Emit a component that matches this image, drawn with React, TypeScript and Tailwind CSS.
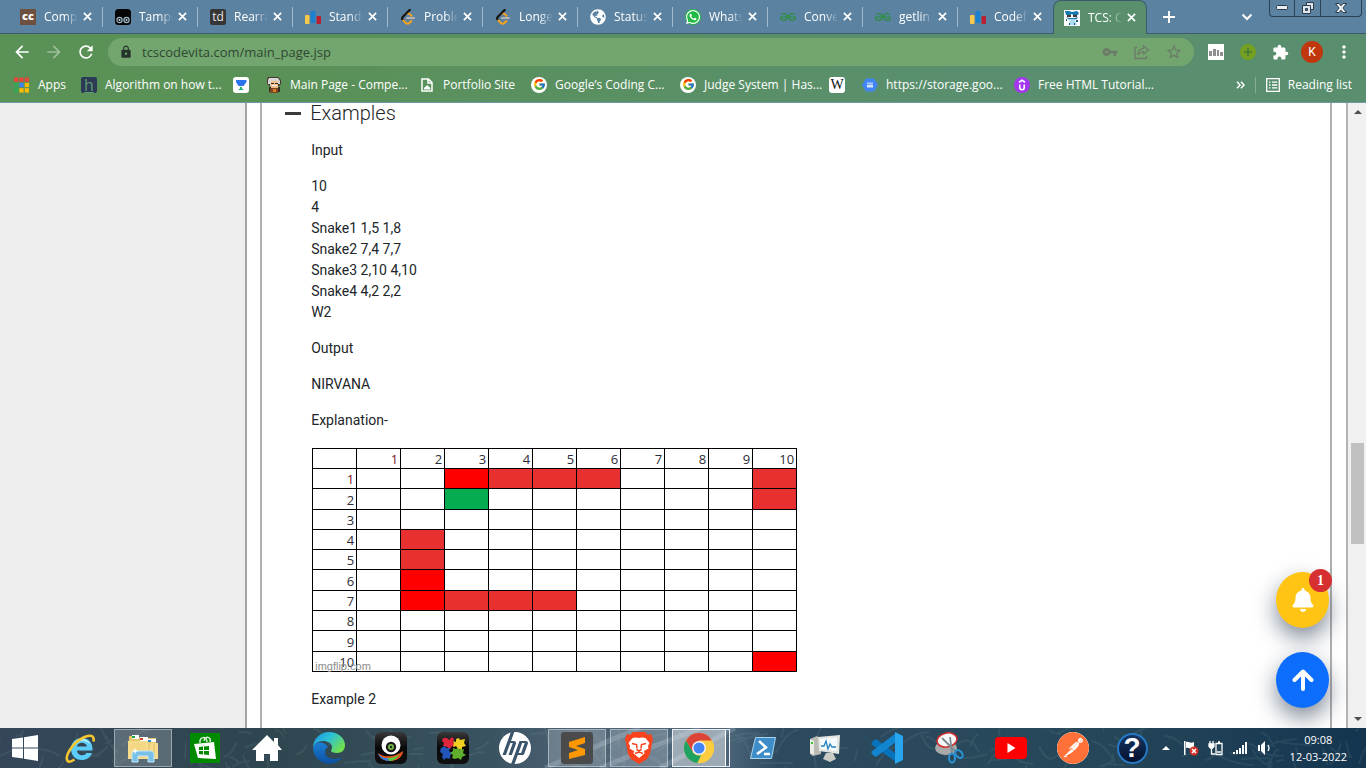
import React from 'react';
import type { ReactNode } from 'react';
import { FcGoogle } from 'react-icons/fc';
import { FaWhatsapp, FaBell, FaGlobeAmericas } from 'react-icons/fa';
import { SiGeeksforgeeks, SiHp, SiPostman } from 'react-icons/si';
import { MdExtension, MdVpnKey, MdStarBorder, MdLock, MdRefresh, MdArrowBack, MdArrowForward, MdMoreVert } from 'react-icons/md';

const ui = "font-['Open_Sans','Noto_Sans',sans-serif]";

const Bars = () => (
  <svg viewBox="0 0 16 16" className="size-4 shrink-0" aria-hidden="true">
    <rect x="0" y="6" width="4.5" height="9" rx="1" fill="#f8c94a" />
    <rect x="5.5" y="2" width="5" height="12" rx="1" fill="#1c80d0" />
    <rect x="11.5" y="7" width="4.5" height="8" rx="1" fill="#b91f2e" />
  </svg>
);

const Leet = () => (
  <svg viewBox="0 0 24 24" className="size-4 shrink-0" fill="none" strokeWidth="3" strokeLinecap="round" aria-hidden="true">
    <path d="M14.5 1.5 4.5 11.5c-1.7 1.7-1.7 3.6 0 5.2" stroke="#161616" />
    <path d="m4.5 16.700 4 4c1.800 1.700 4.200 1.700 6 0l2.600-2.600M8.500 7.500c2.500-1.500 4.500-1.200 6 .2l2.700 2.500" stroke="#f5a31c" />
    <path d="M14.5 1.5 4.5 11.5c-1.2 1.2-1.5 2.500-1 3.700" stroke="#161616" />
    <path d="M10.500 13.500H21" stroke="#b3b3b3" />
  </svg>
);

const Mascot = () => (
  <svg viewBox="0 0 16 16" className="size-4 shrink-0" aria-hidden="true">
    <path fill="#fff" d="M0 0h16v16H0z" />
    <path fill="#1579ad" d="M1 1h4l3 1 5-1 2 2-1 2H9L8 4 6 5H2z" />
    <path fill="#4c3430" d="M3 5h4v2H3zM9 5h4v2H9z" />
    <path fill="#1579ad" d="m2 7 3 1h6l3-1-1 2-4 1-5-1z" />
    <path fill="#a9dcf2" d="M5 9h6v2l2 4H4l2-4z" />
    <path fill="#1d5f86" d="M2 9h1v2H2zM12 10h2v2h-2zM5 13h1v2H5zM10 13h1v2h-1z" />
  </svg>
);

const Tamper = () => (
  <svg viewBox="0 0 16 16" className="size-4 shrink-0" aria-hidden="true">
    <rect width="16" height="16" rx="3.500" fill="#050505" />
    <circle cx="4.500" cy="11" r="2.600" fill="#111" stroke="#9db9c9" strokeWidth="1.200" />
    <circle cx="11.500" cy="11" r="2.600" fill="#111" stroke="#9db9c9" strokeWidth="1.200" />
    <circle cx="4.500" cy="11" r=".9" fill="#cfe0ea" />
    <circle cx="11.500" cy="11" r=".9" fill="#cfe0ea" />
  </svg>
);

const tabs: { title: string; icon: ReactNode }[] = [
  { title: 'Comp', icon: <span className="flex size-4 shrink-0 items-center justify-center bg-[#6d5040] text-[11px] font-extrabold text-white">cc</span> },
  { title: 'Tampe', icon: <Tamper /> },
  { title: 'Rearra', icon: <span className="flex size-4 shrink-0 items-center justify-center rounded-xs bg-[#363636] text-xs leading-4 text-gray-200">td</span> },
  { title: 'Standi', icon: <Bars /> },
  { title: 'Proble', icon: <Leet /> },
  { title: 'Longe', icon: <Leet /> },
  { title: 'Status', icon: <FaGlobeAmericas className="size-4 shrink-0" /> },
  {
    title: 'Whats',
    icon: (
      <span className="flex size-4 shrink-0 items-center justify-center rounded-full bg-[#1fb943]">
        <FaWhatsapp className="size-4" />
      </span>
    ),
  },
  { title: 'Conve', icon: <SiGeeksforgeeks className="size-4 shrink-0 text-[#2f8d46]" /> },
  { title: 'getlin', icon: <SiGeeksforgeeks className="size-4 shrink-0 text-[#2f8d46]" /> },
  { title: 'Codef', icon: <Bars /> },
  { title: 'TCS: C', icon: <Mascot /> },
];

const Cross = () => (
  <svg viewBox="0 0 10 10" className="size-[9px]" stroke="currentColor" strokeWidth="1.900" aria-hidden="true">
    <path d="m1 1 8 8M9 1 1 9" />
  </svg>
);

function TabStrip() {
  return (
    <div className={`flex h-[34px] shrink-0 items-stretch border-b border-[#3e5b6d] bg-[#5b82a1] pl-2 text-xs text-white ${ui}`}>
      {tabs.map((t, i) => {
        const active = i === tabs.length - 1;
        return (
          <div
            key={i}
            className={
              active
                ? '-mb-px flex w-[94px] items-center rounded-t-lg border-x border-t border-[#3e5b6d] bg-[#598f6c] pl-[10px]'
                : 'flex w-[95px] items-center pl-3'
            }
          >
            {t.icon}
            <span className="ml-2 w-[34px] overflow-hidden whitespace-nowrap [mask-image:linear-gradient(to_right,black_60%,transparent)]">{t.title}</span>
            <button aria-label={`Close ${t.title}`} className="ml-1 flex size-[10px] items-center justify-center">
              <Cross />
            </button>
            {i < 10 && <span className="ml-auto h-5 w-px bg-[#a3b8c9]" />}
          </div>
        );
      })}
      <button aria-label="New tab" className="ml-3 flex w-5 items-center justify-center">
        <svg viewBox="0 0 12 12" className="size-3" stroke="currentColor" strokeWidth="1.900"><path d="M6 0v12M0 6h12" /></svg>
      </button>
      <div className="ml-auto flex">
        <button aria-label="Search tabs" className="flex w-7 items-center justify-center">
          <svg viewBox="0 0 12 8" className="h-2 w-3" fill="none" stroke="currentColor" strokeWidth="2"><path d="m1.500 1.500 4.500 4.500 4.500-4.500" /></svg>
        </button>
        <div className="mr-1 ml-2 flex h-[17px] rounded-b-[4px] border border-t-0 border-[#2b4254]">
          <button aria-label="Minimize" className="flex w-[25px] items-center justify-center border-r border-[#2b4254]">
            <svg viewBox="0 0 12 6" className="h-[6px] w-3"><rect x=".5" y=".5" width="11" height="4" rx="1" fill="#e8edf2" stroke="#2c3c4b" /></svg>
          </button>
          <button aria-label="Restore" className="flex w-[26px] items-center justify-center border-r border-[#2b4254]">
            <svg viewBox="0 0 12 12" className="size-3" fill="#dfe6ec" stroke="#2c3c4b"><path d="M4.500.5h7v7h-7z" /><path d="M.5 3.500h8v8h-8z" /><path d="M3.500 6.500h2v2h-2z" fill="#5b82a1" /></svg>
          </button>
          <button aria-label="Close window" className="flex w-[40px] items-center justify-center">
            <svg viewBox="0 0 12 10" className="h-[10px] w-3"><path d="M.5.500h3.500l2 2.300 2-2.300h3.500L8 5l3.500 4.500H8L6 7.200 4 9.500H.5L4 5z" fill="#e8edf2" stroke="#2c3c4b" /></svg>
          </button>
        </div>
      </div>
    </div>
  );
}

function Toolbar() {
  return (
    <div className={`flex h-9 shrink-0 items-center pl-3 text-white ${ui}`}>
      <button aria-label="Back" className="w-8"><MdArrowBack className="size-5" /></button>
      <button aria-label="Forward" className="w-8 text-[#9dbf9b]"><MdArrowForward className="size-5" /></button>
      <button aria-label="Reload" className="w-8"><MdRefresh className="size-5" /></button>
      <div className="flex h-7 min-w-0 flex-1 items-center rounded-full bg-[#73a66f] pl-[11px]">
        <MdLock className="size-[14px] shrink-0 text-[#26332a]" />
        <label className="ml-[9px] min-w-0 flex-1 text-[13px]">
          <input aria-label="Address" defaultValue="tcscodevita.com/main_page.jsp" className="w-full bg-transparent leading-5 text-[#2f4733] outline-none" />
        </label>
        <button aria-label="Passwords" className="flex w-8 justify-center text-[#6c7a68]"><MdVpnKey className="size-4" /></button>
        <button aria-label="Share" className="flex w-8 justify-center text-[#6c7a68]">
          <svg viewBox="0 0 16 16" className="size-4" fill="none" stroke="currentColor" strokeWidth="1.300"><path d="M3 3.500H1v11h11.500V12M9.500 2l5 4-5 4V7.800C6.500 7.800 5 9 3.800 11c.3-3.500 2.200-6.200 5.700-6.600z" /></svg>
        </button>
        <button aria-label="Bookmark this page" className="mr-1 flex w-8 justify-center text-[#6c7a68]"><MdStarBorder className="size-[18px]" /></button>
      </div>
      <div className="ml-[6px] flex pr-[6px]">
        <button aria-label="Standings extension" className="flex w-8 items-center justify-center">
          <svg viewBox="0 0 16 16" className="size-4"><path fill="#fff" d="M0 0h16v16H0z" /><path fill="#8f8f8f" d="M1 7h3v5H1zM5 5h3v7H5zM9 6h2v6H9zM12 8h3v4h-3z" /></svg>
        </button>
        <button aria-label="Add extension" className="flex w-8 items-center justify-center">
          <svg viewBox="0 0 16 16" className="size-4"><circle cx="8" cy="8" r="8" fill="#759f20" /><path d="M8 4v8M4 8h8" stroke="#3f7a3a" strokeWidth="1.500" /></svg>
        </button>
        <button aria-label="Extensions" className="flex w-8 items-center justify-center"><MdExtension className="size-[17px]" /></button>
        <button aria-label="Profile" className="flex w-8 items-center justify-center">
          <span className="flex size-[22px] items-center justify-center rounded-full bg-[#c0360d] font-['Roboto',sans-serif] text-xs">K</span>
        </button>
        <button aria-label="Menu" className="flex w-8 items-center justify-center"><MdMoreVert className="size-5" /></button>
      </div>
    </div>
  );
}

const GoogleIcon = () => (
  <span className="flex size-4 shrink-0 items-center justify-center rounded-full bg-white"><FcGoogle className="size-[13px]" /></span>
);

const AppsIcon = () => (
  <svg viewBox="0 0 14 14" className="size-4 shrink-0 pr-px" aria-hidden="true">
    {['#e8453c', '#e8453c', '#e8453c', '#34a853', '#4285f4', '#fbbc05', '#34a853', '#fbbc05', '#fbbc05'].map((c, i) => (
      <rect key={i} x={(i % 3) * 5} y={Math.floor(i / 3) * 5} width="4" height="4" fill={c} />
    ))}
  </svg>
);

const bookmarks: { label?: string; name?: string; width: string; icon: ReactNode }[] = [
  { label: 'Apps', width: 'w-[67px]', icon: <AppsIcon /> },
  { label: 'Algorithm on how t...', width: 'w-[152px]', icon: <span className="flex size-4 shrink-0 items-center justify-center rounded-xs bg-[#2b3a55] text-base leading-4 text-[#5f9b72] underline">h</span> },
  {
    name: 'Unstop', width: 'w-[33px]',
    icon: <svg viewBox="0 0 16 16" className="size-4"><rect width="16" height="16" rx="3" fill="#fff" /><path fill="#2a74ee" d="M3 3h10.500v2L10.500 9h-5L3 5z" /><path fill="#1eb678" d="M7 10h2v1.500l2 1.500H5l2-1.500z" /></svg>,
  },
  {
    label: 'Main Page - Compe...', width: 'w-[153px]',
    icon: (
      <svg viewBox="0 0 16 16" className="size-4 shrink-0">
        <path fill="#4a3830" d="M2 0h10l3 3v4l-2 2H3L1 6V2z" />
        <path fill="#d8d8d8" d="M3 1h9l2 3v3h-2v2H4V7H2V3z" />
        <path fill="#f1bd8a" d="M5 4h7v7H5z" />
        <path fill="#3a2a22" d="M5 6h3v1H5zM9 6h3v1H9zM3 10h2v5H3zM12 10h2v5h-2z" /><path fill="#f3f3f3" d="M6 8h5v1H6z" />
        <path fill="#7a4a25" d="M5 11h7v5H4v-3z" /><path fill="#dc7a20" d="M7 12h3v3H7z" />
      </svg>
    ),
  },
  {
    label: 'Portfolio Site', width: 'w-[112px]',
    icon: <svg viewBox="0 0 16 16" className="size-4 shrink-0" fill="none" stroke="#fff" strokeWidth="1.500"><path d="M3 2h6.500L13 5.500V14H3zM9 2v4h4" /><path fill="#fff" stroke="none" d="M5 12.500c-.5-2 1-2.500 1.500-2.500.5-2 3-2 3.400 0 1 0 2 1 1.300 2.500z" /></svg>,
  },
  { label: 'Google’s Coding C...', width: 'w-[149px]', icon: <GoogleIcon /> },
  { label: 'Judge System | Has...', width: 'w-[149px]', icon: <GoogleIcon /> },
  { name: 'Wikipedia', width: 'w-[33px]', icon: <span className="flex size-4 items-center justify-center rounded-[3px] bg-white font-['Liberation_Serif',serif] text-sm leading-4 text-[#111111]">W</span> },
  { label: 'https://storage.goo...', width: 'w-[152px]', icon: <svg viewBox="0 0 16 16" className="size-4 shrink-0"><path fill="#4285f4" d="M4 1.500h8L16 8l-4 6.500H4L0 8z" /><path fill="#a9c8fb" d="M5 5.500h6v2H5z" /><path fill="#d5e3fd" d="M5 8h6v2.500H5z" /></svg> },
  {
    label: 'Free HTML Tutorial...', width: 'w-[152px]',
    icon: <svg viewBox="0 0 16 16" className="size-4 shrink-0"><circle cx="8" cy="8" r="8" fill="#a435f0" /><path d="M5.800 7.500v3a2.200 2.200 0 0 0 4.400 0v-3M5 5.200l3-1.900 3 1.900" fill="none" stroke="#fff" strokeWidth="1.600" /></svg>,
  },
];

function BookmarksBar() {
  return (
    <nav aria-label="Bookmarks" className={`flex h-8 shrink-0 items-center pb-[3px] pl-[14px] text-xs text-white ${ui}`}>
      {bookmarks.map((b, i) => (
        <a key={i} href="#" aria-label={b.label ?? b.name} className={`flex items-center gap-2 whitespace-nowrap ${b.width}`}>
          {b.icon}
          {b.label}
        </a>
      ))}
      <div className="ml-auto flex items-center pr-[14px]">
        <button aria-label="More bookmarks">
          <svg viewBox="0 0 9 8" className="h-2 w-[9px]" fill="none" stroke="currentColor" strokeWidth="1.500"><path d="m1 .8 3 3.200-3 3.200M5 .8 8 4 5 7.200" /></svg>
        </button>
        <span className="mx-[10px] h-4 w-px bg-[#86ae90]" />
        <a href="#" className="flex items-center gap-2 whitespace-nowrap">
          <svg viewBox="0 0 14 14" className="size-[14px]" fill="none" stroke="currentColor" strokeWidth="1.300"><path d="M.7.700h12.600v12.600H.7z" /><path d="M3 4.200h1.500M3 7h1.500M3 9.800h1.500M6 4.200h5.300M6 7h5.300M6 9.800h5.300" /></svg>
          Reading list
        </a>
      </div>
    </nav>
  );
}

const nums = [1, 2, 3, 4, 5, 6, 7, 8, 9, 10];
const fills: Record<string, string> = {
  '1-3': 'bg-[#ff0000]', '1-4': 'bg-[#e83030]', '1-5': 'bg-[#e83030]', '1-6': 'bg-[#e83030]', '1-10': 'bg-[#e83030]',
  '2-3': 'bg-[#05ad50]', '2-10': 'bg-[#e83030]',
  '4-2': 'bg-[#e83030]', '5-2': 'bg-[#e83030]', '6-2': 'bg-[#ff0000]',
  '7-2': 'bg-[#ff0000]', '7-3': 'bg-[#e83030]', '7-4': 'bg-[#e83030]', '7-5': 'bg-[#e83030]',
  '10-10': 'bg-[#ff0000]',
};
const head = 'border border-black p-0 pr-[2px] text-right align-bottom text-[13px] font-normal leading-[17px]';

function Board() {
  return (
    <div className="relative mt-[17px] ml-px w-fit">
      <table className={`h-[224px] w-[485px] table-fixed border-collapse bg-white text-[#2d2d35] ${ui}`}>
        <thead>
          <tr className="h-5">
            <td className="border border-black p-0" />
            {nums.map((n) => (
              <th key={n} scope="col" className={n === 1 ? `${head} text-[#7a1520]` : head}>{n}</th>
            ))}
          </tr>
        </thead>
        <tbody>
          {nums.map((r) => (
            <tr key={r} className="h-5">
              <th scope="row" className={r === 1 ? `${head} text-[#7a1520]` : head}>{r}</th>
              {nums.map((c) => (
                <td key={c} className={`border border-black p-0 ${fills[`${r}-${c}`] ?? ''}`} />
              ))}
            </tr>
          ))}
        </tbody>
      </table>
      <span className="absolute bottom-0 left-[3px] font-['Liberation_Sans',sans-serif] text-[11px] leading-3 text-[#8c8c8c]">imgflip.com</span>
    </div>
  );
}

function Page() {
  return (
    <main className="relative flex min-h-0 flex-1 overflow-hidden bg-white">
      <div className="w-[17.95%] shrink-0 bg-[#eeeeee]" />
      <div className="flex min-w-0 flex-1 border-r-2 border-l-2 border-r-[#b4b4b4] border-l-[#a3a3a3] bg-white pr-[14px] pl-[13px]">
        <article className="min-w-0 flex-1 border-x-2 border-x-[#b0b0b0] pl-[23px] font-['Roboto',sans-serif] text-sm leading-[21px] text-[#212529]">
          <h2 className="flex items-center gap-[9px] text-xl leading-5 font-light">
            <span className="h-[3px] w-4 bg-[#3a3a3a]" />
            Examples
          </h2>
          <div className="ml-[26px]">
            <p className="mt-[17px]">Input</p>
            <p className="mt-[15px]">
              10<br />4<br />Snake1 1,5 1,8<br />Snake2 7,4 7,7<br />Snake3 2,10 4,10<br />Snake4 4,2 2,2<br />W2
            </p>
            <p className="mt-[15px]">Output</p>
            <p className="mt-[15px]">NIRVANA</p>
            <p className="mt-[15px]">Explanation-</p>
            <Board />
            <p className="mt-[17px]">Example 2</p>
          </div>
        </article>
      </div>
      <div className="flex w-[18px] shrink-0 flex-col items-center bg-[#f1f1f1] py-[7px] pl-px">
        <svg viewBox="0 0 8 4" className="h-1 w-2 shrink-0"><path d="M4 0l4 4H0z" fill="#505050" /></svg>
        <span className="mt-[329px] h-[101px] w-[13px] shrink-0 bg-[#c1c1c1]" />
        <svg viewBox="0 0 8 4" className="mt-auto h-1 w-2 shrink-0"><path d="M0 0h8L4 4z" fill="#505050" /></svg>
      </div>
      <div className="absolute right-[37px] bottom-5 flex flex-col gap-6">
        <button aria-label="Notifications" className="relative flex h-14 w-[53px] items-center justify-center rounded-[50%] bg-[#ffc414] text-white shadow-[0_10px_22px_rgba(45,60,85,0.6)]">
          <FaBell className="size-6" />
          <span className="absolute -top-[3px] -right-[3px] flex size-[23px] items-center justify-center rounded-full bg-[#d63031] font-['Liberation_Serif',serif] text-sm font-bold">1</span>
        </button>
        <button aria-label="Back to top" className="flex h-14 w-[53px] items-center justify-center rounded-[50%] bg-[#0d6efd] text-white shadow-[0_10px_22px_rgba(45,60,85,0.6)]">
          <svg viewBox="0 0 22 22" className="size-[22px]" fill="none" stroke="currentColor" strokeWidth="4" strokeLinecap="round" strokeLinejoin="round"><path d="M11 20V3M2.500 11 11 2.500l8.500 8.500" /></svg>
        </button>
      </div>
    </main>
  );
}

const Gloss = ({ children }: { children: ReactNode }) => (
  <span className="flex size-8 items-center justify-center rounded-md bg-linear-to-b from-[#3a3a3a] via-[#080808] to-[#101010]">{children}</span>
);

const apps: { name: string; open?: 'open' | 'active'; icon: ReactNode }[] = [
  {
    name: 'Internet Explorer',
    icon: (
      <svg viewBox="0 0 32 32" className="size-8" fill="none">
        <path fillRule="evenodd" d="M27.500 18.500H12c.3 5.500 7.500 6 9.500 2.500H27c-1.500 4.500-5.500 7-10.200 7C10.500 28 6 23.500 6 17S10.500 6 17 6c6.700 0 11 5 10.500 12.500zM12 14.500h9.800c-.4-5-9.300-5-9.800 0z" fill="#5ccdf8" />
        <path d="M8 13c2-5 6-6.500 10-6 4 .4 6.500 2.500 7.500 5.500-4-4.500-11-5-17.500.5z" fill="#b4ecff" />
        <path d="M28.500 9.500c1.500-8-6-6.500-12.500-2.700C7 12-.5 24.500 2.500 28.700c1.300 1.800 4.500.5 7-1.200" stroke="#f6c62f" strokeWidth="2.600" />
      </svg>
    ),
  },
  {
    name: 'File Explorer', open: 'open',
    icon: (
      <svg viewBox="0 0 32 32" className="size-8">
        <path d="M2 4h9l2 2h16v20H2z" fill="#e5c66b" /><path d="M5 3h7v4H5z" fill="#fff" /><path d="M5 4h3v2H5z" fill="#1ba548" />
        <path d="M13 5h8v4h-8z" fill="#fff" /><path d="M13 6h3v2h-3z" fill="#d2442f" /><path d="M21 7h8v3h-8z" fill="#fff" /><path d="M21 8h3v2h-3z" fill="#2b8ad4" />
        <path d="M1 9h19l2 2h9v16H1z" fill="#f6dc8c" /><path d="M22 11v14M27 12v13" stroke="#e2bd62" /><path d="M4 11h14v15H4z" fill="#f4d47c" opacity=".6" />
        <path d="M5 30V22q0-3 3-3h16q3 0 3 3v8h-6v-6H11v6z" fill="#79c1e8" stroke="#c6e8f8" />
        <path d="m8 15 .7 3.300 3.300.7-3.300.7L8 23l-.7-3.300L4 19l3.300-.7z" fill="#fff" />
      </svg>
    ),
  },
  {
    name: 'Store',
    icon: <svg viewBox="0 0 30 30" className="size-[30px]"><path fill="#008a00" d="M0 0h30v30H0z" /><path d="M10 10C9 3 17 3 17 9M14 8c1-6 8-4 6 1" fill="none" stroke="#d9efd9" strokeWidth="1.500" /><path fill="#fff" d="m4 11 20-2 2 17-18-1z" /><path fill="#008a00" d="m9 14 4-.4V17H9zM14 13.500l5-.5v4h-5zM9 18h4v3.500L9 21zM14 18h5v4l-5-.4z" /></svg>,
  },
  { name: 'Home', icon: <svg viewBox="0 0 30 26" className="h-[26px] w-[30px]"><path fill="#fff" d="M15 0 22 7V3h4v7l4 5h-4v11h-8v-7h-6v7H4V15H0z" /></svg> },
  {
    name: 'Edge',
    icon: (
      <svg viewBox="0 0 32 32" className="size-8">
        <defs>
          <linearGradient id="edgeTop" x1="0" y1="0" x2="1" y2=".6"><stop stopColor="#1c8fe0" /><stop offset=".5" stopColor="#2cc1d8" /><stop offset="1" stopColor="#70e04f" /></linearGradient>
          <linearGradient id="edgeLow" x1="0" y1="0" x2="0" y2="1"><stop stopColor="#1b80d4" /><stop offset="1" stopColor="#0c4fa0" /></linearGradient>
        </defs>
        <path d="M0 16a16 16 0 0 0 21 15c3-1 6-3 8-6-7 4-17 2-17-5 0-2 1-4 3-5C11 9 2 9 0 16z" fill="url(#edgeLow)" />
        <path d="M0 16C0 7 7 0 16 0s16 6 16 13c0 5-3 8-8 8-3 0-6-1-6-2s1-1 1-4c0-4-5-6-9-6C5 9 1 12 0 16z" fill="url(#edgeTop)" />
      </svg>
    ),
  },
  { name: 'Webcam', icon: <Gloss><svg viewBox="0 0 28 28" className="size-7"><path d="M1 19c7 6 19 3 25-2 0 6-6 10-13 10C7 27 2 24 1 19z" fill="#e4541c" /><path d="M1 19c3 5 9 6 13 5 0 1 0 2-1 3C7 27 2 24 1 19z" fill="#2d7fe8" /><path d="M11 24c4 0 8-1 11-4-1 4-5 7-9 7-2-1-2-2-2-3z" fill="#58c83c" /><circle cx="14" cy="11" r="9.500" fill="#fff" /><circle cx="14" cy="13" r="5.200" fill="#1a1a1a" /><circle cx="14" cy="13" r="3" fill="#78b84a" /><circle cx="14" cy="13" r="1.200" fill="#173015" /></svg></Gloss> },
  { name: 'Puzzle', icon: <Gloss><svg viewBox="0 0 28 28" className="size-7"><path fill="#e0263a" d="M4 4h4l2 2 3-3 2 2-1 3 3 1-1 4-3-1-2 3-3-2-4-1 1-3-2-2z" /><path fill="#f0d020" d="m17 5 3-1 1 2 5-1-1 4 2 3-4 1 0 3-4-1-2-3-3 1 1-4-1-2 3 1z" /><path fill="#2356b8" d="m2 14 4-2 1 2 4 0-1 3 3 2-2 3 0 3-4-1-2 2-2-3 1-3-3-2z" /><path fill="#5fae2c" d="m14 14 3 1 2-1 2 2 4-1-1 4 3 2-4 2-1 3-3-2-3 1-3-1 1-3-3-2 3-2z" /></svg></Gloss> },
  { name: 'HP', icon: <span className="flex size-8 items-center justify-center rounded-full bg-[#3a556c]"><SiHp className="size-8 text-white" /></span> },
  { name: 'Sublime Text', open: 'open', icon: <svg viewBox="0 0 32 32" className="size-8"><rect width="32" height="32" rx="3" fill="#4b4b4b" /><path fill="#ff9800" d="m8 10 16-5v6l-9 3 9 3v6L8 27v-6l9-3-9-3z" /></svg> },
  {
    name: 'Brave', open: 'open',
    icon: (
      <svg viewBox="0 0 28 32" className="h-8 w-7">
        <path fill="#f8431c" d="M8 0h12l3 3 3-1 2 5-1 4-2 11-3 5-8 5-8-5-3-5L1 11 0 7l2-5 3 1z" />
        <path fill="#fff" d="m14 6 3-.5 3.500.5 4 5-1.500 3 .5 2.500-4.500 2.500.5 2.500-5.500 4.500-5.500-4.500.5-2.500L4.500 16.500 5 14l-1.500-3 4-5 3.500-.5z" />
        <path d="m7 11.500 4.500 1 .5 4M21 11.500l-4.500 1-.5 4M14 18v3M11.500 17.500 14 19l2.500-1.500M10 21.500l4-1.500 4 1.500" fill="none" stroke="#f8431c" strokeWidth="1.500" />
      </svg>
    ),
  },
  { name: 'Chrome', open: 'active', icon: <svg viewBox="0 0 30 30" className="size-[30px]"><circle cx="15" cy="15" r="15" fill="#fbcd3f" /><path fill="#db4437" d="M2 7.500A15 15 0 0 1 28 7.500H15L8.500 19z" /><path fill="#1da261" d="M2 7.500 8.500 18.800A7.500 7.500 0 0 0 17 22.200L13.500 30A15 15 0 0 1 2 7.500z" /><path fill="#fbcd3f" d="M15 8h13.200A15 15 0 0 1 13.500 30L21.500 18z" /><circle cx="15" cy="15" r="7" fill="#f2f2f2" /><circle cx="15" cy="15" r="5.500" fill="#4285f4" /></svg> },
  { name: 'PowerShell', icon: <svg viewBox="0 0 26 22" className="h-[22px] w-[26px]"><path fill="#3d8ec8" stroke="#a9d4ee" d="M5.500.500h20l-4 21H.5z" /><path d="m9 4 7 6.500L7 17M14 17h6" fill="none" stroke="#fff" strokeWidth="2.500" /></svg> },
  { name: 'Resource Monitor', icon: <svg viewBox="0 0 32 30" className="h-[30px] w-8"><path fill="#b9bab2" d="M1 6 8 3l4 3v15l-8 2-3-2z" /><path fill="#ecece4" d="M1 6l4 2v14l-4-2z" /><path fill="#35c52f" d="M2 9h2v2H2z" /><path fill="#e3e5e1" d="m9 4 22-2-1 19-20-3z" /><path fill="#c9cbc7" d="M17 20h7l3 6-6 3-7-3z" /><path fill="#f4fbff" d="m11 6 17-1.500-.5 13.500-16-2z" /><path d="M12 13h3l2-5 2 8 2-5 2 3h4" fill="none" stroke="#2580bd" strokeWidth="1.300" /></svg> },
  { name: 'Visual Studio Code', icon: <svg viewBox="0 0 32 32" className="size-8"><path fill="#0873bd" d="m2 9 3-2 20 15v8L0 12z" /><path fill="#1185cf" d="m0 20 25-19v9L5 25l-3-2z" /><path fill="#27a5ef" d="m24 0 8 4v24l-8 4z" /></svg> },
  { name: 'Snipping Tool', icon: <svg viewBox="0 0 30 32" className="h-8 w-[30px]"><ellipse cx="12" cy="16" rx="11" ry="7" fill="#a9a9a9" /><ellipse cx="13" cy="8" rx="10" ry="7" fill="#f7f7f7" stroke="#d22c2c" strokeWidth="1.500" transform="rotate(-12 13 8)" /><path d="m8 6 14 14M16 5l2 16" stroke="#7c8990" strokeWidth="1.800" /><ellipse cx="18" cy="26" rx="3" ry="4.500" fill="none" stroke="#2a94d6" strokeWidth="2" /><ellipse cx="25" cy="22" rx="3" ry="4.500" fill="none" stroke="#2a94d6" strokeWidth="2" transform="rotate(-40 25 22)" /></svg> },
  { name: 'YouTube', icon: <svg viewBox="0 0 32 22" className="h-[22px] w-8"><rect width="32" height="22" rx="4" fill="#f00" /><path fill="#fff" d="m12.500 6 8 5-8 5z" /></svg> },
  { name: 'Postman', icon: <SiPostman className="size-8 rounded-full bg-white text-[#ff7139]" /> },
  { name: 'Help', icon: <span className="mr-[6px] flex size-[31px] items-center justify-center rounded-full border-2 border-[#2679c4] bg-linear-to-b from-[#153664] to-[#06122c] font-['Liberation_Sans',sans-serif] text-[28px] leading-none font-bold text-white">?</span> },
];

const noise = (n: number) => {
  const v = Math.sin(n * 12.9898) * 43758.5453;
  return v - Math.floor(v);
};

const streaks = Array.from({ length: 170 }, (_, i) => {
  const x = Math.round(noise(i) * 1366);
  const y = Math.round(noise(i + 500) * 40);
  const dx = Math.round((noise(i + 900) - 0.4) * 60);
  const dy = Math.round((noise(i + 1300) - 0.5) * 44);
  return `M${x} ${y}q${Math.round(dx / 2)} ${dy} ${dx} ${dy}`;
}).join('');

function Taskbar() {
  return (
    <footer className={`relative isolate flex h-10 shrink-0 items-center overflow-hidden bg-[#2e4a5c] text-white ${ui}`}>
      <svg viewBox="0 0 1366 40" preserveAspectRatio="none" className="absolute inset-0 -z-10 size-full" aria-hidden="true">
        <defs>
          <linearGradient id="shade"><stop stopColor="#35465a" /><stop offset=".2" stopColor="#2e464f" /><stop offset=".36" stopColor="#3a5361" /><stop offset=".42" stopColor="#4d6274" /><stop offset=".53" stopColor="#4c657b" /><stop offset=".57" stopColor="#2d4a5e" /><stop offset=".8" stopColor="#264759" /><stop offset="1" stopColor="#14354f" /></linearGradient>
        </defs>
        <path fill="url(#shade)" d="M0 0h1366v40H0z" />
        <path d={streaks} fill="none" stroke="#89aab0" strokeOpacity=".12" strokeWidth="2" />
        <path d="M545 40 640 0M600 40 700 0M660 40 735 0" stroke="#b7c8d8" strokeOpacity=".25" strokeWidth="5" />
      </svg>
      <button aria-label="Start" className="mr-[2px] flex w-[50px] justify-center">
        <svg viewBox="0 0 26 26" className="size-[26px]"><path fill="#fff" d="M0 4 11 2.500v10H0zM12 2.300 26 0v12.500H12zM0 13.500h11v10L0 22zM12 13.500h14V26l-14-2.300z" /></svg>
      </button>
      <div className="flex min-w-0 flex-1 gap-1">
        {apps.map((a) => (
          <button
            key={a.name}
            aria-label={a.name}
            className={
              a.open === 'active'
                ? 'flex h-[38px] w-[58px] shrink-0 border border-white/90'
                : a.open === 'open'
                  ? 'flex h-[38px] w-[58px] shrink-0 items-center justify-center border border-white/40 bg-white/20'
                  : 'flex h-[38px] w-[58px] shrink-0 items-center justify-center'
            }
          >
            {a.open === 'active' ? (
              <span className="flex h-full w-[53px] items-center justify-center border-r border-white bg-white/45">{a.icon}</span>
            ) : (
              a.icon
            )}
          </button>
        ))}
      </div>
      <div className="flex shrink-0 items-center pr-[19px]">
        <button aria-label="Show hidden icons" className="mr-[13px]">
          <svg viewBox="0 0 8 4" className="h-1 w-2"><path d="M4 0l4 4H0z" fill="#fff" /></svg>
        </button>
        <button aria-label="Action center" className="mr-[9px]">
          <svg viewBox="0 0 16 16" className="size-4"><path fill="#fff" d="M1 1h1.500v14H1zM3 2c3-1 4 2 8 0v6c-4 2-5-1-8 0z" /><circle cx="11" cy="11" r="4.500" fill="#d8312a" /><path d="m9 9 4 4M13 9l-4 4" stroke="#fff" strokeWidth="1.500" /></svg>
        </button>
        <button aria-label="Battery" className="mr-[10px]">
          <svg viewBox="0 0 15 16" className="h-4 w-[15px]" fill="none" stroke="#fff" strokeWidth="1.300"><path d="M2 1v3M5 1v3M3.500 8v6H7" /><path fill="#fff" d="M1 4h5v2.500L4.500 8h-2L1 6.500z" /><path d="M8 3.500h6v11H8zM10 2h2M9 12h4" /></svg>
        </button>
        <button aria-label="Network" className="mr-[10px]">
          <svg viewBox="0 0 15 12" className="h-3 w-[15px]" fill="#fff"><path d="M0 10h2v2H0zM3 8h2v4H3zM6 6h2v6H6zM9 3h2v9H9zM12 0h2v12h-2z" /></svg>
        </button>
        <button aria-label="Volume" className="mr-[19px]">
          <svg viewBox="0 0 13 14" className="h-[14px] w-[13px]"><path fill="#fff" d="M0 4h2v6H0zM3 4l4-4v14l-4-4z" /><path d="M10 4q2 3 0 6" fill="none" stroke="#fff" strokeWidth="1.200" /></svg>
        </button>
        <div className="text-center text-[11px] leading-[17px] whitespace-nowrap">
          09:08
          <br />
          12-03-2022
        </div>
      </div>
    </footer>
  );
}

export default function App() {
  return (
    <div className="flex h-screen flex-col overflow-hidden">
      <TabStrip />
      <header className="shrink-0 border-b border-[#6d97a5] bg-linear-to-r from-[#5a9157] from-20% to-[#598f6e] to-70%">
        <Toolbar />
        <BookmarksBar />
      </header>
      <Page />
      <Taskbar />
    </div>
  );
}
